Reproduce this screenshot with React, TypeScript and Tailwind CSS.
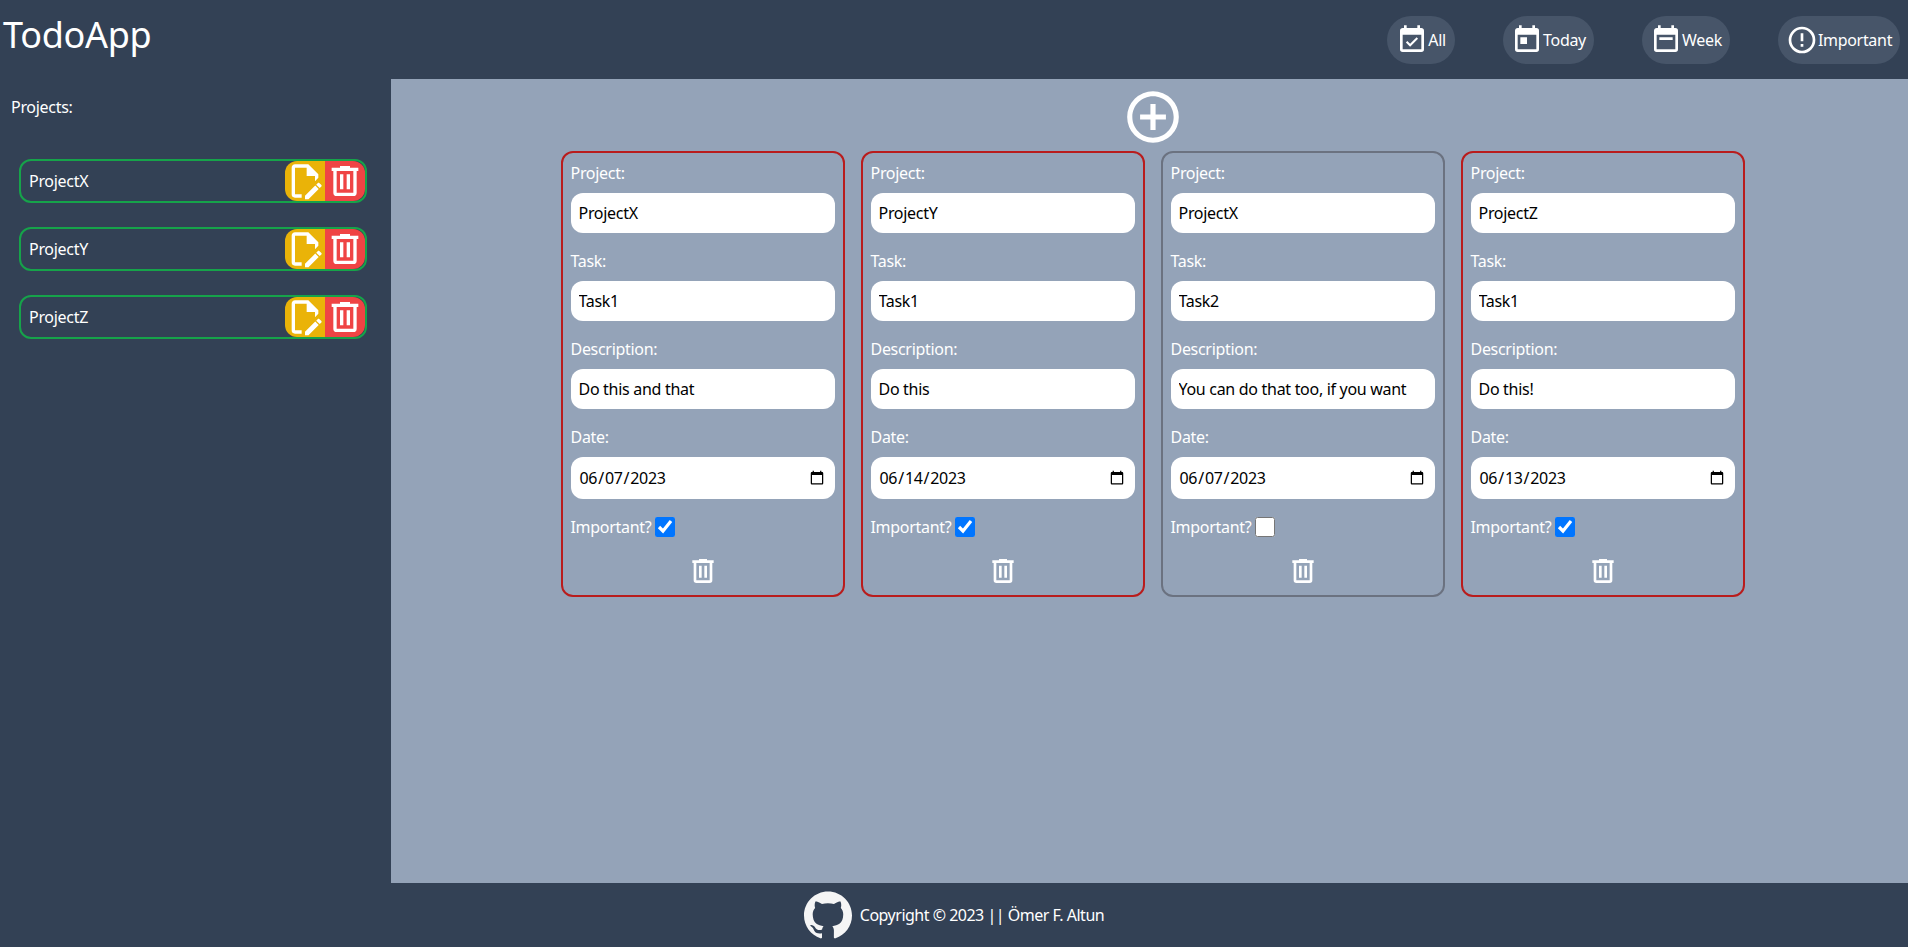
import { SiGithub } from 'react-icons/si';

const ICONS = {
  all: 'M19,19H5V8H19M16,1V3H8V1H6V3H5C3.89,3 3,3.89 3,5V19A2,2 0 0,0 5,21H19A2,2 0 0,0 21,19V5C21,3.89 20.1,3 19,3H18V1M16.53,11.06L15.47,10L10.59,14.88L8.47,12.76L7.41,13.82L10.59,17L16.53,11.06Z',
  today: 'M7,10H12V15H7M19,19H5V8H19M19,3H18V1H16V3H8V1H6V3H5C3.89,3 3,3.9 3,5V19A2,2 0 0,0 5,21H19A2,2 0 0,0 21,19V5A2,2 0 0,0 19,3Z',
  week: 'M7,10H17V12H7M19,19H5V8H19M19,3H18V1H16V3H8V1H6V3H5C3.89,3 3,3.9 3,5V19A2,2 0 0,0 5,21H19A2,2 0 0,0 21,19V5A2,2 0 0,0 19,3Z',
  important: 'M11,15H13V17H11V15M11,7H13V13H11V7M12,2C6.47,2 2,6.5 2,12A10,10 0 0,0 12,22A10,10 0 0,0 22,12A10,10 0 0,0 12,2M12,20A8,8 0 0,1 4,12A8,8 0 0,1 12,4A8,8 0 0,1 20,12A8,8 0 0,1 12,20Z',
  add: 'M12,20C7.59,20 4,16.41 4,12C4,7.59 7.59,4 12,4C16.41,4 20,7.59 20,12C20,16.41 16.41,20 12,20M12,2A10,10 0 0,0 2,12A10,10 0 0,0 12,22A10,10 0 0,0 22,12A10,10 0 0,0 12,2M13,7H11V11H7V13H11V17H13V13H17V11H13V7Z',
  edit: 'M6 2C4.89 2 4 2.9 4 4V20A2 2 0 0 0 6 22H10V20H6V4H13V9H18V12.1L20 10.1V8L14 2H6M20.15 13C20 13 19.86 13.05 19.75 13.16L18.73 14.18L20.82 16.26L21.84 15.25C22.05 15.03 22.05 14.67 21.84 14.46L20.54 13.16C20.43 13.05 20.29 13 20.15 13M18.14 14.77L12 20.92V23H14.08L20.23 16.85L18.14 14.77Z',
  trash: 'M9,3V4H4V6H5V19A2,2 0 0,0 7,21H17A2,2 0 0,0 19,19V6H20V4H15V3H9M7,6H17V19H7V6M9,8V17H11V8H9M13,8V17H15V8H13Z',
};

function Icon({ d, className }: { d: string; className: string }) {
  return (
    <svg viewBox="0 0 24 24" fill="currentColor" className={`block shrink-0 ${className}`}>
      <path d={d} />
    </svg>
  );
}

const navItems = [
  { label: 'All', icon: ICONS.all, width: 'w-[68px]' },
  { label: 'Today', icon: ICONS.today, width: 'w-[91px]' },
  { label: 'Week', icon: ICONS.week, width: 'w-[88px]' },
  { label: 'Important', icon: ICONS.important, width: 'w-[122px]' },
];

const projects = ['ProjectX', 'ProjectY', 'ProjectZ'];

const todos = [
  { project: 'ProjectX', task: 'Task1', description: 'Do this and that', date: '2023-06-07', important: true },
  { project: 'ProjectY', task: 'Task1', description: 'Do this', date: '2023-06-14', important: true },
  { project: 'ProjectX', task: 'Task2', description: 'You can do that too, if you want', date: '2023-06-07', important: false },
  { project: 'ProjectZ', task: 'Task1', description: 'Do this!', date: '2023-06-13', important: true },
];

function Field({ label, value, type = 'text', height = 'h-10' }: { label: string; value: string; type?: string; height?: string }) {
  return (
    <>
      <label className="block mb-2">{label}</label>
      <input type={type} defaultValue={value} className={`block w-full mb-4 px-2 rounded-xl bg-white text-black outline-none ${height}`} />
    </>
  );
}

export default function App() {
  return (
    <div className="h-screen flex flex-col overflow-hidden text-white text-base tracking-[-0.3px] font-['Noto_Sans',sans-serif]">
      <header className="h-[79px] shrink-0 flex items-center justify-between bg-[#334155] pl-[3px] pr-2">
        <h1 className="text-4xl font-normal mb-[10px]">TodoApp</h1>
        <nav className="flex items-center gap-12">
          {navItems.map((item) => (
            <button key={item.label} className={`flex items-center justify-center py-2 rounded-full bg-[#475569] ${item.width}`}>
              <Icon d={item.icon} className="w-8 h-8" />
              {item.label}
            </button>
          ))}
        </nav>
      </header>

      <div className="flex-1 flex min-h-0">
        <aside className="w-[391px] shrink-0 bg-[#334155] pt-4">
          <p className="pl-[11px] mb-10">Projects:</p>
          <ul className="flex flex-col gap-6 pl-[19px]">
            {projects.map((name) => (
              <li key={name} className="w-[348px] flex items-center justify-between border-2 border-[#16a34a] rounded-xl pl-2">
                <span>{name}</span>
                <div className="flex">
                  <button className="bg-[#eab308] rounded-l-xl">
                    <Icon d={ICONS.edit} className="w-10 h-10" />
                  </button>
                  <button className="bg-[#ef4444] rounded-r-xl">
                    <Icon d={ICONS.trash} className="w-10 h-10" />
                  </button>
                </div>
              </li>
            ))}
          </ul>
        </aside>

        <main className="flex-1 bg-[#94a3b8] flex flex-col items-center pt-[7px] pl-[6px]">
          <button className="mb-[3px]">
            <Icon d={ICONS.add} className="w-[62px] h-[62px]" />
          </button>
          <div className="flex gap-4">
            {todos.map((todo, i) => (
              <div key={i} className={`w-[284px] border-2 rounded-xl p-2 ${todo.important ? 'border-[#b91c1c]' : 'border-[#6b7280]'}`}>
                <Field label="Project:" value={todo.project} />
                <Field label="Task:" value={todo.task} />
                <Field label="Description:" value={todo.description} />
                <Field label="Date:" type="date" value={todo.date} height="h-[42px]" />
                <div className="flex items-center gap-1 mb-4">
                  <span>Important?</span>
                  <input type="checkbox" defaultChecked={todo.important} className="w-5 h-5" />
                </div>
                <button className="block mx-auto">
                  <Icon d={ICONS.trash} className="w-8 h-8" />
                </button>
              </div>
            ))}
          </div>
        </main>
      </div>

      <footer className="h-16 shrink-0 bg-[#334155] flex items-center justify-center gap-2">
        <SiGithub className="w-12 h-12 text-[#f5f5f5]" />
        <span className="tracking-[-0.5px]">Copyright © 2023 || Ömer F. Altun</span>
      </footer>
    </div>
  );
}
